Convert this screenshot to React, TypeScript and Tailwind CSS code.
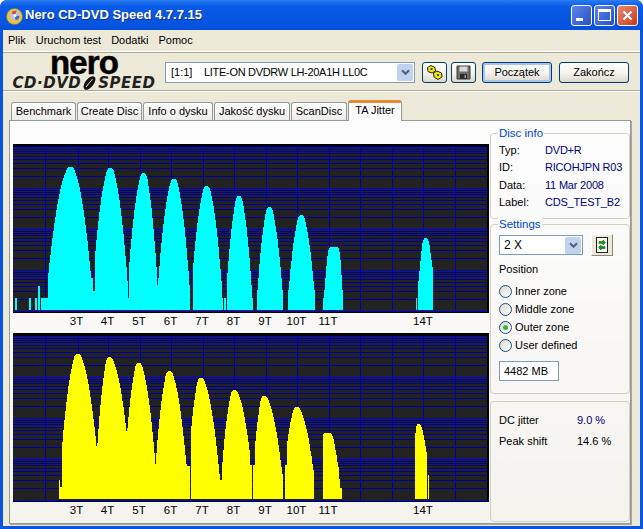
import React from 'react'

const ui = "font-['Liberation_Sans',Arial,sans-serif] text-[11px] text-black whitespace-nowrap"

const gridX = [45, 78, 108, 140, 171, 203, 234, 266, 297, 329, 360, 392, 423, 455]

type Peak = { c: number; top: number; kl: number; kr: number; x0: number; x1: number; flat?: number }
type Bar = { x0: number; x1: number; y: number }

const cyanPeaks: Peak[] = [
  { c: 70.7, top: 167, kl: 0.215, kr: 0.264, x0: 48, x1: 93 },
  { c: 110.3, top: 168, kl: 0.38, kr: 0.38, x0: 95, x1: 129 },
  { c: 143.7, top: 173, kl: 0.44, kr: 0.58, x0: 129, x1: 158 },
  { c: 174, top: 179, kl: 0.41, kr: 0.44, x0: 158, x1: 190 },
  { c: 206.7, top: 186, kl: 0.44, kr: 0.44, x0: 193, x1: 223 },
  { c: 239, top: 196, kl: 0.59, kr: 0.56, x0: 227, x1: 253 },
  { c: 269.3, top: 207, kl: 0.6, kr: 0.48, x0: 257, x1: 283 },
  { c: 301.3, top: 215, kl: 0.47, kr: 0.44, x0: 288, x1: 315 },
  { c: 334, top: 247, kl: 1, kr: 1.5, x0: 323, x1: 343, flat: 3 },
  { c: 425.7, top: 238, kl: 0.84, kr: 0.65, x0: 418, x1: 433 },
]
const cyanBars: Bar[] = [
  { x0: 15, x1: 17, y: 298 },
  { x0: 29, x1: 31, y: 298 },
  { x0: 35, x1: 37, y: 298 },
  { x0: 38, x1: 40, y: 286 },
  { x0: 41, x1: 48, y: 298 },
  { x0: 48, x1: 93, y: 278 },
  { x0: 93, x1: 95, y: 291 },
  { x0: 95, x1: 190, y: 298 },
  { x0: 193, x1: 223, y: 298 },
  { x0: 224, x1: 226, y: 298 },
  { x0: 227, x1: 253, y: 298 },
  { x0: 257, x1: 283, y: 298 },
  { x0: 288, x1: 315, y: 298 },
  { x0: 323, x1: 343, y: 298 },
  { x0: 416, x1: 417, y: 298 },
  { x0: 418, x1: 433, y: 291 },
]

const yellowPeaks: Peak[] = [
  { c: 77.7, top: 354, kl: 0.38, kr: 0.26, x0: 62, x1: 97 },
  { c: 109.3, top: 357, kl: 0.62, kr: 0.25, x0: 98, x1: 127 },
  { c: 138.7, top: 363, kl: 0.52, kr: 0.36, x0: 127, x1: 156 },
  { c: 169.3, top: 371, kl: 0.5, kr: 0.32, x0: 156, x1: 190 },
  { c: 200.7, top: 378, kl: 0.56, kr: 0.27, x0: 191, x1: 222 },
  { c: 234.3, top: 390, kl: 0.51, kr: 0.26, x0: 222, x1: 250 },
  { c: 264, top: 396, kl: 0.62, kr: 0.233, x0: 255, x1: 283 },
  { c: 296.7, top: 407, kl: 0.4, kr: 0.227, x0: 287, x1: 314 },
  { c: 327.3, top: 433, kl: 0.8, kr: 0.42, x0: 323, x1: 340, flat: 2 },
  { c: 418.3, top: 424, kl: 2, kr: 0.42, x0: 415, x1: 427 },
]
const yellowBars: Bar[] = [
  { x0: 59, x1: 60, y: 480 },
  { x0: 60, x1: 62, y: 487 },
  { x0: 62, x1: 97, y: 448 },
  { x0: 97, x1: 98, y: 443 },
  { x0: 98, x1: 190, y: 466 },
  { x0: 191, x1: 250, y: 480 },
  { x0: 250, x1: 252, y: 465 },
  { x0: 253, x1: 255, y: 465 },
  { x0: 255, x1: 283, y: 480 },
  { x0: 285, x1: 287, y: 465 },
  { x0: 287, x1: 314, y: 475 },
  { x0: 340, x1: 342, y: 488 },
  { x0: 428, x1: 429, y: 475 },
]

// counts sit on a log axis, so the outline steps get bigger near the floor
function outline(peaks: Peak[], bars: Bar[], floor: number) {
  let d = ''
  for (let x = 13; x < 489; x++) {
    let y = floor
    for (const b of bars) if (x >= b.x0 && x < b.x1) y = Math.min(y, b.y)
    for (const p of peaks) {
      if (x < p.x0 || x >= p.x1) continue
      const dist = Math.max(0, Math.abs(x + 0.5 - p.c) - (p.flat ?? 0))
      // domes are blunter than a parabola near the very top
      const blunt = Math.min(1, dist / 5)
      const raw = p.top + (x < p.c ? p.kl : p.kr) * dist * dist * blunt
      const n = Math.max(1, Math.round(Math.pow(10, (floor - raw) / 41)))
      y = Math.min(y, floor - 41 * Math.log10(n))
    }
    if (y < floor) d += `M${x} ${floor}V${Math.round(y)}H${x + 1}V${floor}Z`
  }
  return d
}

function Chart({ fill, peaks, bars, floor, top }: { fill: string; peaks: Peak[]; bars: Bar[]; floor: number; top: number }) {
  const minor: number[] = []
  for (let dec = 0; dec < 4; dec++) {
    for (let n = 2; n < 10; n++) {
      minor.push(Math.round(floor + 1 - 41 * dec - 41 * Math.log10(n)))
    }
  }
  return (
    <svg width="476" height="169" viewBox={`13 ${top} 476 169`} className="block">
      <rect x="13" y={top} width="476" height="169" fill="#000" />
      <rect x="13" y={top + 3} width="474" height="164" fill="#222222" />
      {minor.filter((y) => y > top + 1).map((y, i) => (
        <rect key={i} x="13" width="474" y={y} height="1" fill="#00009c" />
      ))}
      {gridX.map((x) => (
        <rect key={x} x={x} width="1" y={top + 3} height="164" fill="#0000a4" />
      ))}
      {[0, 1, 2, 3, 4].map((dec) => (
        <rect key={dec} x="13" width="474" y={floor + 1 - 41 * dec} height="1" fill="#0000e8" />
      ))}
      <path d={outline(peaks, bars, floor)} fill={fill} shapeRendering="crispEdges" />
    </svg>
  )
}

function Ticks() {
  const ticks = [
    ['3T', 'w-[31px] ml-[48px]'],
    ['4T', 'w-[31px]'],
    ['5T', 'w-[32px]'],
    ['6T', 'w-[31px]'],
    ['7T', 'w-[32px]'],
    ['8T', 'w-[31px]'],
    ['9T', 'w-[32px]'],
    ['10T', 'w-[31px]'],
    ['11T', 'w-[32px]'],
    ['14T', 'w-[32px] ml-[63px]'],
  ]
  return (
    <div className="flex h-[20px] items-center pb-[2px] text-[11.5px]">
      {ticks.map(([t, c]) => (
        <span key={t} className={`${c} text-center`}>{t}</span>
      ))}
    </div>
  )
}

function Tab({ label, w, active }: { label: string; w: string; active?: boolean }) {
  if (active) {
    return (
      <div className={`${w} relative z-10 mb-[-1px] h-[21px] rounded-t-[3px] border-x border-[#919b9c] border-t-[3px] border-t-[#e68b2c] bg-[#fcfcfe] text-center leading-[15px]`}>
        {label}
      </div>
    )
  }
  return (
    <div className={`${w} h-[18px] rounded-t-[3px] border-x border-t border-[#919b9c] bg-gradient-to-b from-white to-[#ecebe5] text-center leading-[16px]`}>
      {label}
    </div>
  )
}

function XpButton({ w, children, isDefault }: { w: string; children: React.ReactNode; isDefault?: boolean }) {
  return (
    <div className={`${w} flex h-[21px] items-center justify-center rounded-[3px] border border-[#003c74] bg-gradient-to-b from-white via-[#f5f4ee] to-[#dcd8cb] ${isDefault ? 'shadow-[inset_0_0_0_2px_#a9c3ea]' : ''}`}>
      {children}
    </div>
  )
}

function Chevron() {
  return (
    <div className="flex h-[17px] w-[16px] items-center justify-center rounded-[2px] bg-[#c1d2ee]">
      <svg width="9" height="7" viewBox="0 0 9 7">
        <path d="M1 1.2 4.5 4.8 8 1.2" fill="none" stroke="#4d6185" strokeWidth="2" />
      </svg>
    </div>
  )
}

function Radio({ label, checked }: { label: string; checked?: boolean }) {
  return (
    <div className="flex h-[18px] items-center gap-[3px]">
      <div className="flex h-[13px] w-[13px] items-center justify-center rounded-full border border-[#1c5180] bg-gradient-to-br from-[#dcd9d0] to-white">
        {checked && <div className="h-[5px] w-[5px] rounded-full bg-[#3cb43c]" />}
      </div>
      <span>{label}</span>
    </div>
  )
}

function Group({ title, className, children }: { title?: string; className: string; children: React.ReactNode }) {
  return (
    <div className={`${className} relative rounded-[4px] border border-[#d0d0bf] px-[8px]`}>
      {title && (
        <span className="absolute left-[7px] top-[-8px] bg-[#fbfbf9] px-px text-[11.5px] leading-[14px] text-[#0046d5]">{title}</span>
      )}
      {children}
    </div>
  )
}

function InfoRow({ label, value }: { label: string; value: string }) {
  return (
    <div className="flex h-[17.5px] items-center">
      <span className="w-[46px] shrink-0">{label}</span>
      <span className="tracking-[-0.2px] text-[#00007f]">{value}</span>
    </div>
  )
}

export default function App() {
  return (
    <div className={`${ui} h-[529px] w-[643px] overflow-hidden bg-white`}>
      <div className="flex h-full flex-col rounded-t-[7px] bg-[#0a55e0]">
        {/* title bar */}
        <div className="flex h-[30px] shrink-0 items-center rounded-t-[7px] bg-gradient-to-b from-[#2a7cf5] via-[#0a5be8] via-[20%] to-[#0450dc] pl-[6px] pr-[5px]">
          <svg width="17" height="17" viewBox="0 0 17 17" className="mt-[2px] shrink-0">
            <circle cx="8.5" cy="8.5" r="8" fill="#e3c24a" stroke="#8a7a3a" strokeWidth="0.6" />
            <circle cx="9" cy="7.5" r="5" fill="#b9c4dc" />
            <path d="M5.5 5a4.5 4.5 0 0 1 5-2L9 7.5Z" fill="#d84a3a" />
            <path d="M13.5 8a4.5 4.5 0 0 1-4 4.2L9 7.5Z" fill="#4a6ab8" />
            <circle cx="9" cy="7.5" r="1.5" fill="#ffffff" />
          </svg>
          <span className="ml-[2px] text-[13px] font-bold text-white [text-shadow:1px_1px_0_#0f2f9c]">
            Nero CD-DVD Speed 4.7.7.15
          </span>
          <div className="ml-auto flex gap-[2px]">
            <div className="flex h-[21px] w-[21px] items-end rounded-[3px] border border-white bg-gradient-to-br from-[#5c85ec] to-[#2a50c4] pb-[4px] pl-[4px]">
              <div className="h-[3px] w-[7px] bg-white" />
            </div>
            <div className="flex h-[21px] w-[21px] items-center justify-center rounded-[3px] border border-white bg-gradient-to-br from-[#5c85ec] to-[#2a50c4]">
              <div className="h-[12px] w-[13px] border border-t-[3px] border-white" />
            </div>
            <div className="flex h-[21px] w-[21px] items-center justify-center rounded-[3px] border border-white bg-gradient-to-br from-[#e98a6c] to-[#c8351a]">
              <svg width="11" height="11" viewBox="0 0 11 11">
                <path d="M1.5 1.5 9.5 9.5M9.5 1.5 1.5 9.5" stroke="#fff" strokeWidth="2" />
              </svg>
            </div>
          </div>
        </div>

        {/* window body */}
        <div className="mx-[3px] mb-[3px] flex min-h-0 flex-1 flex-col bg-[#ece9d8]">
          <div className="flex h-[21px] shrink-0 items-center gap-[10px] pl-[5px]">
            <span>Plik</span>
            <span>Uruchom test</span>
            <span>Dodatki</span>
            <span>Pomoc</span>
          </div>
          <div className="h-[2px] shrink-0 border-b border-[#aca899] bg-white" />

          {/* toolbar */}
          <div className="flex h-[37px] shrink-0 items-start pt-[9px]">
            <div className="mt-[-9px] flex h-[37px] w-[162px] shrink-0 flex-col items-center">
              <span className="h-[24px] text-[33px] font-bold leading-[20px] tracking-[-0.9px] [-webkit-text-stroke:0.5px_black]">nero</span>
              <span className="flex h-[12px] items-center font-['DejaVu_Sans',sans-serif] text-[15px] font-bold italic leading-[12px] tracking-[0.5px] text-[#222]">
                CD·DVD
                <svg width="15" height="14" viewBox="0 0 15 14" className="mx-px">
                  <ellipse cx="7.5" cy="7" rx="8" ry="4.2" transform="rotate(-52 7.5 7)" fill="#111" />
                  <path d="M4 11 10.5 3" stroke="#ece9d8" strokeWidth="1" />
                </svg>
                SPEED
              </span>
            </div>
            <div className="flex h-[21px] w-[250px] shrink-0 items-center justify-between border border-[#7f9db9] bg-white pl-[5px] pr-px">
              <span className="flex">
                <span className="w-[33px]">[1:1]</span>
                <span className="tracking-[-0.3px]">LITE-ON DVDRW LH-20A1H LL0C</span>
              </span>
              <Chevron />
            </div>
            <div className="ml-[7px]">
              <XpButton w="w-[25px]">
                <svg width="19" height="17" viewBox="0 0 19 17">
                  <path d="M2.5 3.5 6 1.5 10 3.5 10.5 7 7 9 3 7.5Z" fill="#f5e800" stroke="#222" strokeWidth="1" />
                  <path d="M8.5 9 12 7 16.5 9 17 13 13 15.5 9 13Z" fill="#f5e800" stroke="#222" strokeWidth="1" />
                  <circle cx="6.5" cy="5" r="1.1" fill="#222" />
                  <circle cx="13" cy="11" r="1.1" fill="#222" />
                </svg>
              </XpButton>
            </div>
            <div className="ml-[4px]">
              <XpButton w="w-[25px]">
                <svg width="15" height="15" viewBox="0 0 15 15">
                  <path d="M1 1H14V14H1Z" fill="#6e6e6e" stroke="#3a3a3a" />
                  <rect x="3.5" y="1.5" width="8" height="5" fill="#d8d8d8" />
                  <rect x="4" y="9" width="7" height="5" fill="#2a2a2a" />
                  <rect x="8.5" y="10" width="1.5" height="3" fill="#9a9a9a" />
                </svg>
              </XpButton>
            </div>
            <div className="ml-[6px]">
              <XpButton w="w-[70px]" isDefault>Początek</XpButton>
            </div>
            <div className="ml-[7px]">
              <XpButton w="w-[70px]">Zakończ</XpButton>
            </div>
          </div>
          <div className="h-[2px] shrink-0 border-t border-[#aca899] bg-white" />

          {/* tabs */}
          <div className="relative z-10 ml-[8px] mt-[8px] flex h-[20px] shrink-0 items-end">
            <Tab label="Benchmark" w="w-[65px]" />
            <div className="w-px" />
            <Tab label="Create Disc" w="w-[65px]" />
            <div className="w-px" />
            <Tab label="Info o dysku" w="w-[70px]" />
            <div className="w-px" />
            <Tab label="Jakość dysku" w="w-[76px]" />
            <div className="w-px" />
            <Tab label="ScanDisc" w="w-[56px]" />
            <div className="w-px" />
            <Tab label="TA Jitter" w="w-[54px]" active />
          </div>

          {/* tab panel */}
          <div className="ml-[6px] mr-[9px] flex h-[404px] shrink-0 border border-[#919b9c] bg-gradient-to-b from-[#fdfdfe] to-[#f4f3ee] pl-[3px] pt-[23px] shadow-[1px_1px_0_#aca899]">
            <div className="w-[476px] shrink-0">
              <Chart fill="#00ffff" peaks={cyanPeaks} bars={cyanBars} floor={310} top={144} />
              <Ticks />
              <Chart fill="#ffff00" peaks={yellowPeaks} bars={yellowBars} floor={499} top={333} />
              <Ticks />
            </div>
            <div className="ml-px mt-[-11px] flex w-[140px] shrink-0 flex-col">
              <Group title="Disc info" className="h-[86px] pt-[7px]">
                <InfoRow label="Typ:" value="DVD+R" />
                <InfoRow label="ID:" value="RICOHJPN R03" />
                <InfoRow label="Data:" value="11 Mar 2008" />
                <InfoRow label="Label:" value="CDS_TEST_B2" />
              </Group>
              <Group title="Settings" className="mt-[5px] h-[170px] pt-[9px]">
                <div className="flex items-center">
                  <div className="flex h-[20px] w-[84px] items-center justify-between border border-[#7f9db9] bg-white pl-[4px] pr-px text-[12px]">
                    <span>2 X</span>
                    <Chevron />
                  </div>
                  <div className="ml-[8px] flex h-[22px] w-[22px] items-center justify-center border border-b-[#8a8778] border-l-white border-r-[#8a8778] border-t-white bg-[#ece9d8]">
                    <svg width="14" height="16" viewBox="0 0 14 16">
                      <rect x="1.5" y="0.5" width="11" height="15" fill="#fff" stroke="#222" />
                      <path d="M4 7V4.5H8V3L10.5 5.5 8 8V6.5H5.5" fill="#1a9a1a" stroke="#0a6a0a" strokeWidth="0.6" />
                      <path d="M10 9V11.5H6V13L3.5 10.5 6 8V9.5H8.5" fill="#1a9a1a" stroke="#0a6a0a" strokeWidth="0.6" />
                    </svg>
                  </div>
                </div>
                <div className="mt-[6px] h-[14px] leading-[14px]">Position</div>
                <div className="mt-[6px] flex flex-col">
                  <Radio label="Inner zone" />
                  <Radio label="Middle zone" />
                  <Radio label="Outer zone" checked />
                  <Radio label="User defined" />
                </div>
                <div className="mt-[7px] flex h-[20px] w-[60px] items-center border border-[#7f9db9] bg-white pl-[4px]">4482 MB</div>
              </Group>
              <Group className="mt-[7px] h-[121px] pt-[11px]">
                <div className="flex h-[14px] items-center">
                  <span className="w-[78px]">DC jitter</span>
                  <span className="text-[#00007f]">9.0 %</span>
                </div>
                <div className="mt-[7px] flex h-[14px] items-center">
                  <span className="w-[78px]">Peak shift</span>
                  <span>14.6 %</span>
                </div>
              </Group>
            </div>
          </div>
        </div>
      </div>
    </div>
  )
}
